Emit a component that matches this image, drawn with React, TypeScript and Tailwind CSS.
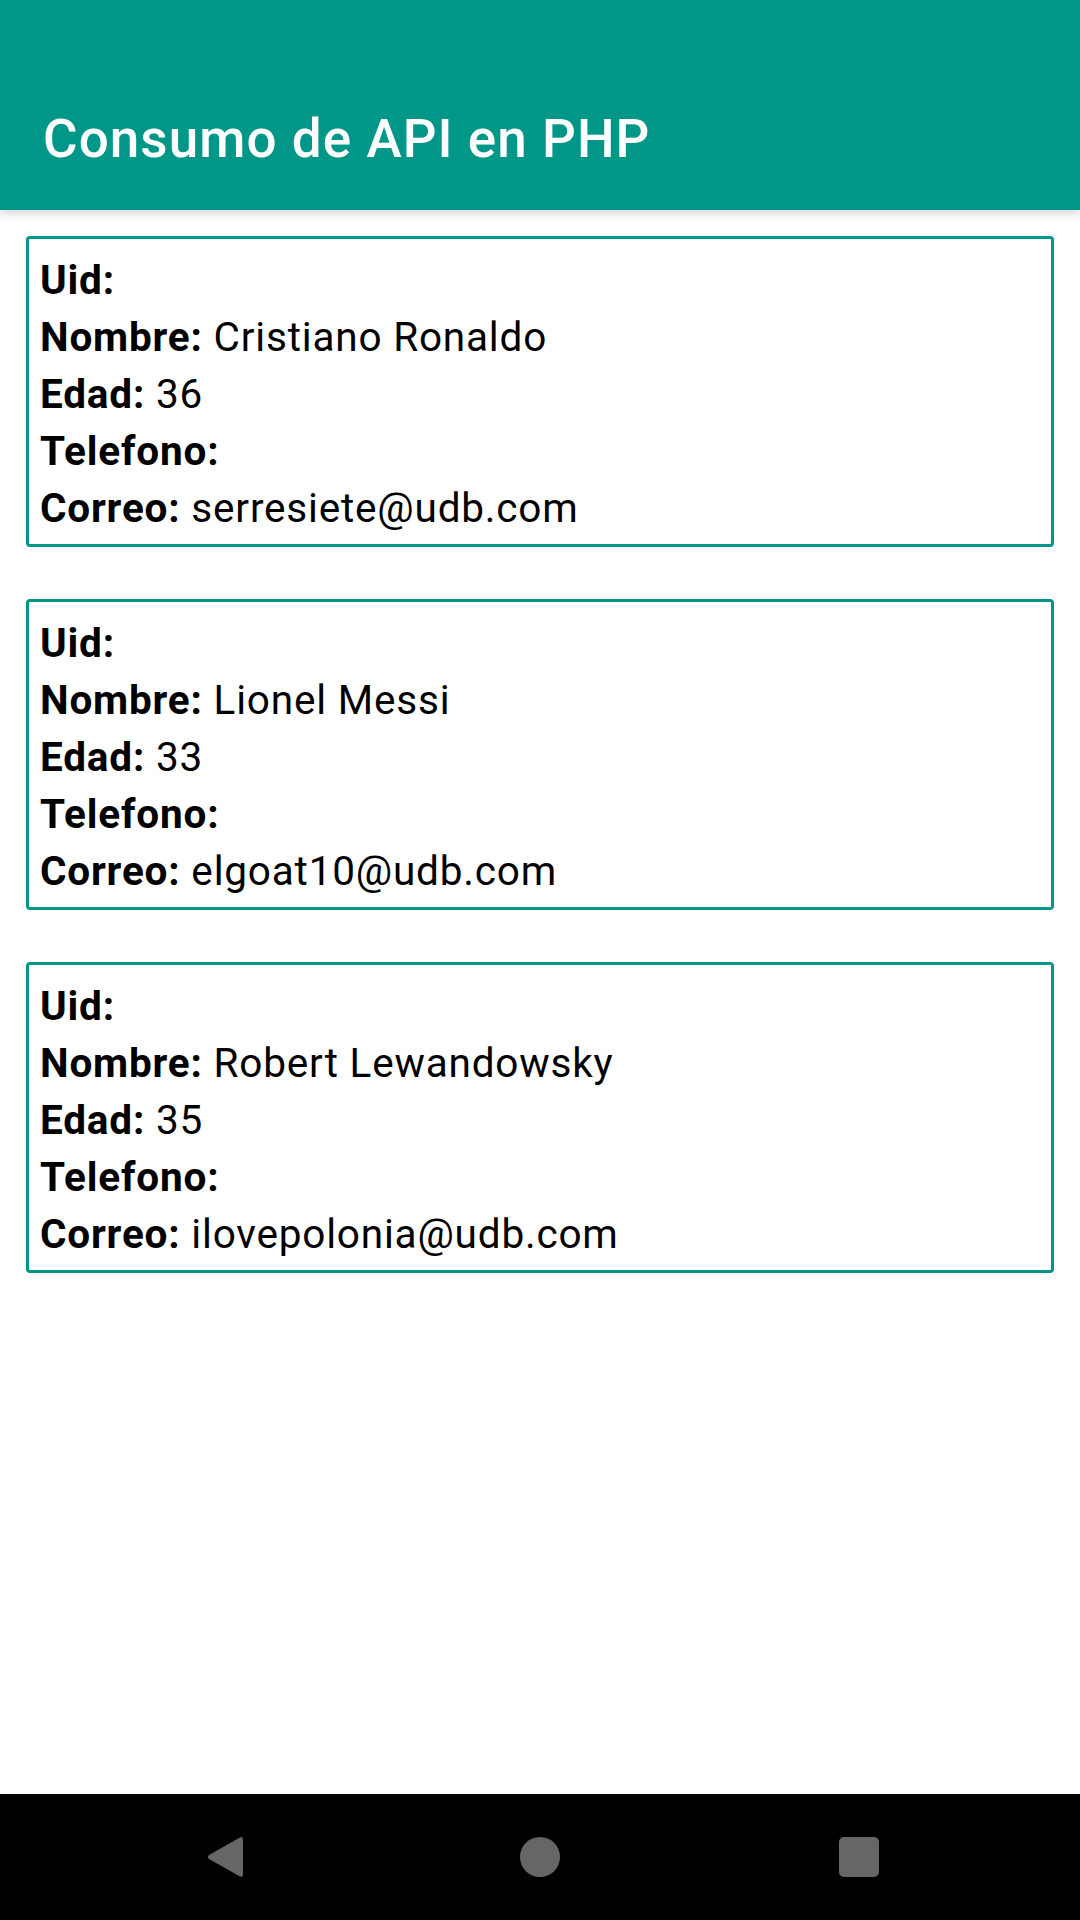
const personas = [
  { uid: '', nombre: 'Cristiano Ronaldo', edad: '36', telefono: '', correo: 'serresiete@udb.com' },
  { uid: '', nombre: 'Lionel Messi', edad: '33', telefono: '', correo: 'elgoat10@udb.com' },
  { uid: '', nombre: 'Robert Lewandowsky', edad: '35', telefono: '', correo: 'ilovepolonia@udb.com' },
];

function Campo({ label, value }: { label: string; value: string }) {
  return (
    <div className="text-[40.5px] leading-[57px] tracking-[0.02em] text-black whitespace-nowrap">
      <span className="font-bold">{label}:</span>
      {value ? <span> {value}</span> : null}
    </div>
  );
}

export default function App() {
  return (
    <div
      className="w-[1080px] min-h-[1920px] flex flex-col bg-white"
      style={{ fontFamily: 'Roboto, "Noto Sans", sans-serif' }}
    >
      {/* Toolbar */}
      <header className="relative h-[210px] bg-[#009688] pt-[109px] pl-[43px] shadow-[0_3px_10px_rgba(0,0,0,0.18)] z-10">
        <h1 className="text-[53px] leading-[60px] tracking-[0.02em] font-medium text-white">Consumo de API en PHP</h1>
      </header>

      {/* Lista */}
      <main className="flex-1 flex flex-col gap-[52px] pt-[26px] px-[26px]">
        {personas.map((p) => (
          <div
            key={p.correo}
            className="border-[3px] border-[#009688] rounded-[4px] pt-[13px] pb-[7px] pl-[11px]"
          >
            <Campo label="Uid" value={p.uid} />
            <Campo label="Nombre" value={p.nombre} />
            <Campo label="Edad" value={p.edad} />
            <Campo label="Telefono" value={p.telefono} />
            <Campo label="Correo" value={p.correo} />
          </div>
        ))}
      </main>

      {/* Barra de navegacion */}
      <nav className="h-[126px] bg-black flex items-center justify-center">
        <div className="w-[315px] flex justify-center">
          <svg width="36" height="42" viewBox="0 0 36 42">
            <path
              d="M33 1.5 Q36 0 36 4 L36 38 Q36 42 33 40.5 L2 23 Q0 21 2 19 Z"
              fill="#666666"
            />
          </svg>
        </div>
        <div className="w-[315px] flex justify-center">
          <div className="w-[40px] h-[40px] rounded-full bg-[#666666]" />
        </div>
        <div className="w-[315px] flex justify-center">
          <div className="w-[40px] h-[40px] rounded-[5px] bg-[#666666] ml-[7px]" />
        </div>
      </nav>
    </div>
  );
}
